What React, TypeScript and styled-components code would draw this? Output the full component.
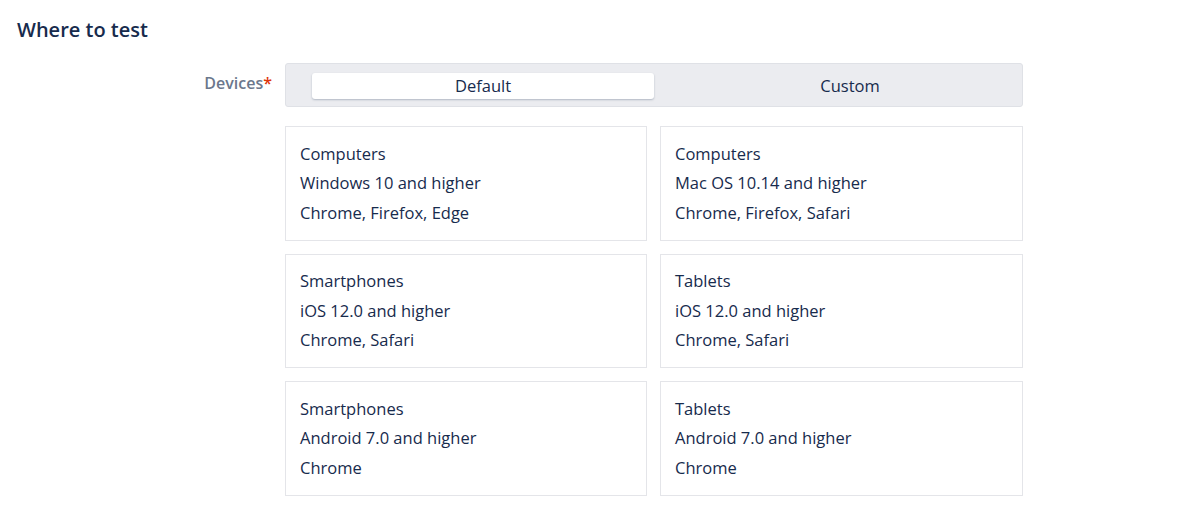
import React from "react";
import styled, { createGlobalStyle } from "styled-components";

const Global = createGlobalStyle`
  html, body { margin: 0; padding: 0; background: #ffffff; }
  body { font-family: "Open Sans", "Noto Sans", sans-serif; color: #172b4d; }
  * { box-sizing: border-box; }
`;

const Page = styled.div`
  padding: 15px 17px;
`;

const Heading = styled.h2`
  margin: 0;
  font-size: 20px;
  font-weight: 600;
  line-height: 30px;
  color: #172b4d;
`;

const FieldRow = styled.div`
  display: grid;
  grid-template-columns: 255px 738px;
  column-gap: 13px;
  margin-top: 18px;
`;

const Label = styled.div`
  text-align: right;
  font-size: 16px;
  font-weight: 600;
  color: #6b778c;
  line-height: 20px;
  padding-top: 10px;
`;

const Required = styled.span`
  color: #de350b;
`;

const Content = styled.div`
  display: flex;
  flex-direction: column;
  gap: 19px;
`;

const Segmented = styled.div`
  display: grid;
  grid-template-columns: 342px 342px;
  column-gap: 25px;
  height: 44px;
  padding: 9px 0 0 26px;
  background: #ebecf0;
  border: 1px solid #dfe1e6;
  border-radius: 3px;
`;

const Segment = styled.div<{ $active?: boolean }>`
  height: 26px;
  display: flex;
  align-items: center;
  justify-content: center;
  padding-bottom: 2px;
  font-size: 16.5px;
  color: #172b4d;
  border-radius: 3px;
  background: ${(p) => (p.$active ? "#ffffff" : "transparent")};
  box-shadow: ${(p) => (p.$active ? "0 1px 2px rgba(9,30,66,0.25)" : "none")};
`;

const Grid = styled.div`
  display: grid;
  grid-template-columns: 362px 363px;
  column-gap: 13px;
  row-gap: 13px;
`;

const Card = styled.div`
  height: 114.5px;
  border: 1px solid #e4e5e9;
  padding: 11.5px 14px;
  font-size: 16.5px;
  line-height: 29.5px;
  color: #172b4d;
`;

const cards = [
  ["Computers", "Windows 10 and higher", "Chrome, Firefox, Edge"],
  ["Computers", "Mac OS 10.14 and higher", "Chrome, Firefox, Safari"],
  ["Smartphones", "iOS 12.0 and higher", "Chrome, Safari"],
  ["Tablets", "iOS 12.0 and higher", "Chrome, Safari"],
  ["Smartphones", "Android 7.0 and higher", "Chrome"],
  ["Tablets", "Android 7.0 and higher", "Chrome"],
];

export default function App() {
  return (
    <Page>
      <Global />
      <Heading>Where to test</Heading>
      <FieldRow>
        <Label>
          Devices<Required>*</Required>
        </Label>
        <Content>
          <Segmented>
            <Segment $active>Default</Segment>
            <Segment>Custom</Segment>
          </Segmented>
          <Grid>
            {cards.map((c, i) => (
              <Card key={i}>
                {c.map((line, j) => (
                  <div key={j}>{line}</div>
                ))}
              </Card>
            ))}
          </Grid>
        </Content>
      </FieldRow>
    </Page>
  );
}
